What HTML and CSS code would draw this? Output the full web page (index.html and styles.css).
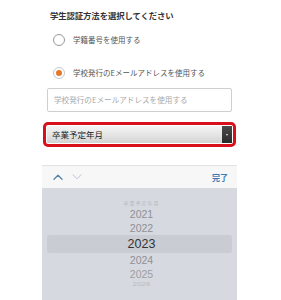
FILE: index.html
```html
<!DOCTYPE html>
<html lang="ja">
<head>
<meta charset="utf-8">
<link rel="stylesheet" href="styles.css">
</head>
<body>
<div class="page">
  <h1 class="title">学生認証方法を選択してください</h1>
  <div class="radio-row">
    <span class="radio"></span>
    <span class="radio-label">学籍番号を使用する</span>
  </div>
  <div class="radio-row second">
    <span class="radio checked"><span class="dot"></span></span>
    <span class="radio-label">学校発行のEメールアドレスを使用する</span>
  </div>
  <div class="input">学校発行のEメールアドレスを使用する</div>
  <div class="select-wrap">
    <div class="select">
      <span class="select-text">卒業予定年月</span>
      <span class="select-arrow"><span class="tri"></span></span>
    </div>
  </div>
  <div class="toolbar">
    <div class="chevrons">
      <svg class="chev up" width="10" height="6" viewBox="0 0 10 6"><path d="M1 5.2 L5 1.2 L9 5.2" fill="none" stroke="currentColor" stroke-width="1.3" stroke-linecap="round" stroke-linejoin="round"/></svg>
      <svg class="chev down" width="10" height="6" viewBox="0 0 10 6"><path d="M1 0.8 L5 4.8 L9 0.8" fill="none" stroke="currentColor" stroke-width="1" stroke-linecap="round" stroke-linejoin="round"/></svg>
    </div>
    <span class="done">完了</span>
  </div>
  <div class="picker">
    <div class="p-item p-label">卒業予定年月</div>
    <div class="p-item p-near">2021</div>
    <div class="p-item p-near">2022</div>
    <div class="p-item p-sel">2023</div>
    <div class="p-item p-near">2024</div>
    <div class="p-item p-near p-far">2025</div>
    <div class="p-item p-edge">2026</div>
  </div>
</div>
</body>
</html>
```
FILE: styles.css
```css
html, body {
  margin: 0;
  padding: 0;
  background: #ffffff;
}
body {
  font-family: "Noto Sans CJK JP", "Noto Sans", sans-serif;
  color: #333;
}
.page {
  width: 195px;
  margin-left: 42px;
  display: flex;
  flex-direction: column;
  height: 300px;
  overflow: hidden;
}
.title {
  margin: 9px 0 0 8px;
  font-size: 8.4px;
  line-height: 12px;
  font-weight: 700;
  color: #333;
  letter-spacing: -0.1px;
}
.radio-row {
  display: flex;
  align-items: center;
  height: 14px;
  margin-top: 12px;
  padding-left: 11px;
}
.radio-row.second {
  margin-top: 19px;
}
.radio {
  width: 10px;
  height: 10px;
  border: 1px solid #9a9a9a;
  border-radius: 50%;
  display: flex;
  align-items: center;
  justify-content: center;
  box-sizing: content-box;
}
.radio.checked {
  border-color: #c8c8c8;
}
.dot {
  width: 6px;
  height: 6px;
  border-radius: 50%;
  background: #e5782c;
}
.radio-label {
  margin-left: 8px;
  font-size: 7.5px;
  color: #555;
  line-height: 14px;
}
.input {
  margin: 8px 5px 0 5px;
  height: 22px;
  border: 1px solid #cfcfcf;
  border-radius: 2px;
  font-size: 7.6px;
  line-height: 22px;
  padding-left: 6px;
  color: #a8a8a8;
}
.select-wrap {
  margin: 10px 1px 0 1px;
  height: 19px;
  border: 3px solid #d9101c;
  border-radius: 5px;
  padding: 0 1px;
  display: flex;
  align-items: center;
}
.select {
  flex: 1;
  height: 17px;
  display: flex;
  align-items: stretch;
  background: linear-gradient(#f4f4f4, #e4e4e4 55%, #d2d2d2);
  border-radius: 1px;
}
.select-text {
  flex: 1;
  font-size: 8.5px;
  line-height: 17px;
  padding-left: 5px;
  color: #222;
}
.select-arrow {
  width: 10px;
  background: linear-gradient(#4a4a4a, #2a2a2a);
  display: flex;
  align-items: center;
  justify-content: center;
}
.tri {
  width: 0;
  height: 0;
  border-left: 1.5px solid transparent;
  border-right: 1.5px solid transparent;
  border-top: 2px solid #e8e8e8;
}
.toolbar {
  margin-top: 18px;
  height: 22px;
  border-top: 1px solid #e2e2e2;
  background: #f7f7f7;
  display: flex;
  align-items: center;
  justify-content: space-between;
  padding: 0 9px 0 11px;
}
.chevrons {
  display: flex;
  align-items: center;
  gap: 9px;
}
.chev.up { color: #5283ad; }
.chev.down { color: #b8c4d2; }
.done {
  font-size: 8px;
  font-weight: 700;
  color: #3c7bb6;
}
.picker {
  flex: 1;
  background: #d6d9df;
  display: flex;
  flex-direction: column;
  align-items: stretch;
  padding-top: 11px;
}
.p-item {
  text-align: center;
  font-family: "Liberation Sans", Arial, sans-serif;
  padding-left: 4px;
}
.p-label {
  height: 8px;
  font-family: "Noto Sans CJK JP", sans-serif;
  font-size: 5px;
  line-height: 8px;
  color: #b5b8be;
  letter-spacing: 1px;
}
.p-near {
  height: 14px;
  line-height: 14px;
  font-size: 10.5px;
  color: #8e9096;
}
.p-far {
  color: #9c9ea4;
}
.p-sel {
  height: 18px;
  line-height: 18px;
  font-size: 12.5px;
  color: #333;
  background: #c9ccd2;
  border-radius: 3px;
  margin: 0 5px;
  padding-left: 4px;
}
.p-edge {
  height: 8px;
  line-height: 8px;
  font-size: 8px;
  color: #b8bbc1;
  transform: scaleY(0.7);
}
```
